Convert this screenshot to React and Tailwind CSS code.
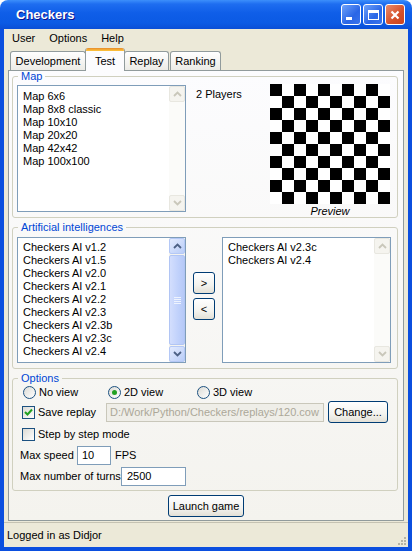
import React from "react";

const maps = ["Map 6x6", "Map 8x8 classic", "Map 10x10", "Map 20x20", "Map 42x42", "Map 100x100"];
const allAis = [
  "Checkers AI v1.2",
  "Checkers AI v1.5",
  "Checkers AI v2.0",
  "Checkers AI v2.1",
  "Checkers AI v2.2",
  "Checkers AI v2.3",
  "Checkers AI v2.3b",
  "Checkers AI v2.3c",
  "Checkers AI v2.4",
];
const chosenAis = ["Checkers AI v2.3c", "Checkers AI v2.4"];

function Chevron({ up, color }) {
  return (
    <svg width="9" height="6" viewBox="0 0 9 6">
      <polyline
        points={up ? "1,5 4.5,1.5 8,5" : "1,1 4.5,4.5 8,1"}
        fill="none"
        stroke={color}
        strokeWidth="1.8"
      />
    </svg>
  );
}

function ScrollBar({ enabled }) {
  if (!enabled) {
    return (
      <div className="w-[16px] flex flex-col justify-between bg-[#fbfbf9]">
        <div className="h-[16px] rounded-[2px] border border-[#e8e7e0] bg-[#f5f4ef] flex items-center justify-center">
          <Chevron up color="#c9c7ba" />
        </div>
        <div className="h-[16px] rounded-[2px] border border-[#e8e7e0] bg-[#f5f4ef] flex items-center justify-center">
          <Chevron color="#c9c7ba" />
        </div>
      </div>
    );
  }
  return (
    <div className="w-[16px] flex flex-col bg-[#f4f3ee]">
      <div className="h-[16px] rounded-[2px] border border-[#b4c8f6] bg-[linear-gradient(135deg,#e3ebfe,#b9cdf8)] flex items-center justify-center">
        <Chevron up color="#4d6185" />
      </div>
      <div className="flex-1 my-[1px] rounded-[2px] border border-[#b1c5f4] bg-[linear-gradient(90deg,#d3defd,#c0d1fb_60%,#b6c9f7)] flex flex-col items-center justify-center gap-[1px]">
        <div className="w-[7px] h-[1px] bg-[#eef3fe]" />
        <div className="w-[7px] h-[1px] bg-[#eef3fe]" />
        <div className="w-[7px] h-[1px] bg-[#eef3fe]" />
        <div className="w-[7px] h-[1px] bg-[#eef3fe]" />
      </div>
      <div className="h-[16px] rounded-[2px] border border-[#b4c8f6] bg-[linear-gradient(135deg,#e3ebfe,#b9cdf8)] flex items-center justify-center">
        <Chevron color="#4d6185" />
      </div>
    </div>
  );
}

function ListBox({ items, enabled, tall }) {
  return (
    <div className={`w-[169px] border border-[#7f9db9] bg-white flex ${tall ? "h-[127px]" : "h-[126px]"}`}>
      <div className={`flex-1 pl-[5px] leading-[13px] ${tall ? "pt-[4px]" : "pt-[3px]"}`}>
        {items.map((i) => (
          <div key={i}>{i}</div>
        ))}
      </div>
      <ScrollBar enabled={enabled} />
    </div>
  );
}

function XpButton({ children, className = "" }) {
  return (
    <div
      className={`h-[22px] rounded-[3px] border border-[#003c74] bg-[linear-gradient(180deg,#ffffff,#f3f3ef_60%,#e3e0d6)] flex items-center justify-center ${className}`}
    >
      {children}
    </div>
  );
}

function Radio({ checked }) {
  return (
    <div className="w-[13px] h-[13px] rounded-full border border-[#1c5180] bg-[linear-gradient(135deg,#dcdbd5,#ffffff)] flex items-center justify-center">
      {checked && <div className="w-[5px] h-[5px] rounded-full bg-[#21a121]" />}
    </div>
  );
}

function Check({ checked }) {
  return (
    <div className="w-[13px] h-[13px] border border-[#1c5180] bg-[linear-gradient(135deg,#dcdbd5,#ffffff)] flex items-center justify-center">
      {checked && (
        <svg width="9" height="9" viewBox="0 0 9 9">
          <polyline points="1,4 3.5,6.5 8,1.5" fill="none" stroke="#21a121" strokeWidth="2" />
        </svg>
      )}
    </div>
  );
}

function GroupBox({ title, children, className = "" }) {
  return (
    <fieldset className={`w-[386px] ml-[3px] pl-[4px] rounded-[3px] border border-[#d0d0bf] ${className}`}>
      <legend className="ml-[1px] px-[3px] leading-[11px] text-[#0046d5]">{title}</legend>
      {children}
    </fieldset>
  );
}

export default function App() {
  return (
    <div className="w-[412px] h-[551px] flex flex-col font-['Liberation_Sans',Arial,sans-serif] text-[11px] leading-[13px] text-black">
      {/* Title bar */}
      <div className="h-[29px] rounded-t-[8px] bg-[linear-gradient(180deg,#3c8ffb_0%,#1e6df0_14%,#0f5ee8_45%,#0b5ae4_80%,#0a4ed6_100%)] flex items-center pl-[16px] pr-[7px]">
        <span className="text-white font-bold text-[13px] [text-shadow:1px_1px_#0f1089]">Checkers</span>
        <div className="ml-auto flex gap-[2px]">
          <div className="w-[20px] h-[21px] rounded-[3px] border border-white bg-[linear-gradient(135deg,#6ea2fa,#2a66e6_60%,#3a74ec)] flex items-end pl-[4px] pb-[4px]">
            <div className="w-[6px] h-[3px] bg-white" />
          </div>
          <div className="w-[20px] h-[21px] rounded-[3px] border border-white bg-[linear-gradient(135deg,#6ea2fa,#2a66e6_60%,#3a74ec)] flex items-center justify-center">
            <div className="w-[11px] h-[10px] border border-white border-t-[3px]" />
          </div>
          <div className="w-[20px] h-[21px] rounded-[3px] border border-white bg-[linear-gradient(135deg,#ea8c6c,#d5502a_60%,#c94420)] flex items-center justify-center">
            <svg width="10" height="10" viewBox="0 0 10 10">
              <path d="M1.5 1.5 L8.5 8.5 M8.5 1.5 L1.5 8.5" stroke="white" strokeWidth="2.2" />
            </svg>
          </div>
        </div>
      </div>

      <div className="flex-1 flex flex-col bg-[#ece9d8] border-x-[4px] border-b-[4px] border-[#0b4fdf]">
        {/* Menu */}
        <div className="h-[18px] flex items-center gap-[14px] pl-[8px]">
          <span>User</span>
          <span>Options</span>
          <span>Help</span>
        </div>

        {/* Tabs */}
        <div className="h-[23px] flex items-end pl-[6px] relative z-10">
          <div className="w-[76px] h-[19px] rounded-t-[3px] border border-b-0 border-[#919b9c] bg-[linear-gradient(180deg,#ffffff,#ecebe6)] flex items-center justify-center">
            Development
          </div>
          <div className="w-[40px] h-[23px] -mb-[1px] -mx-[1px] rounded-t-[3px] border-x border-[#919b9c] bg-[#fcfcfe] flex flex-col overflow-hidden">
            <div className="h-[3px] bg-[linear-gradient(180deg,#e68b2c,#ffc73c)]" />
            <div className="flex-1 flex items-center justify-center">Test</div>
          </div>
          <div className="w-[45px] h-[19px] rounded-t-[3px] border border-b-0 border-[#919b9c] bg-[linear-gradient(180deg,#ffffff,#ecebe6)] flex items-center justify-center">
            Replay
          </div>
          <div className="w-[51px] h-[19px] ml-[1px] rounded-t-[3px] border border-b-0 border-[#919b9c] bg-[linear-gradient(180deg,#ffffff,#ecebe6)] flex items-center justify-center">
            Ranking
          </div>
        </div>

        {/* Tab panel */}
        <div className="mx-[4px] h-[451px] border border-[#919b9c] bg-[linear-gradient(180deg,#fcfcfe,#f4f3ee)] flex flex-col">
          <GroupBox title="Map" className="pb-[5px]">
            <div className="h-[130px] flex items-start pt-[3px]">
              <ListBox items={maps} tall />
              <div className="w-[74px] ml-[10px] mt-[3px]">2 Players</div>
              <div className="-mt-[1px] flex flex-col items-center">
                <div className="grid grid-cols-10 w-[120px] h-[120px]">
                  {Array.from({ length: 100 }, (_, i) => {
                    const dark = (Math.floor(i / 10) + (i % 10)) % 2 === 0;
                    return <div key={i} className={dark ? "bg-black" : "bg-white"} />;
                  })}
                </div>
                <div className="italic mt-[1px]">Preview</div>
              </div>
            </div>
          </GroupBox>

          <GroupBox title="Artificial intelligences" className="mt-[4px] pb-[5px]">
            <div className="flex items-start pt-[4px]">
              <ListBox items={allAis} enabled />
              <div className="ml-[7px] mt-[35px] flex flex-col gap-[4px]">
                <XpButton className="w-[22px]">&gt;</XpButton>
                <XpButton className="w-[22px]">&lt;</XpButton>
              </div>
              <div className="ml-[7px]">
                <ListBox items={chosenAis} />
              </div>
            </div>
          </GroupBox>

          <GroupBox title="Options" className="mt-[4px] pb-[4px]">
            <div className="pl-[3px]">
              <div className="h-[16px] flex items-center">
                <div className="w-[85px] ml-[3px] flex items-center gap-[3px]">
                  <Radio />
                  <span>No view</span>
                </div>
                <div className="w-[89px] flex items-center gap-[3px]">
                  <Radio checked />
                  <span>2D view</span>
                </div>
                <div className="flex items-center gap-[3px]">
                  <Radio />
                  <span>3D view</span>
                </div>
              </div>

              <div className="mt-[1px] h-[22px] flex items-center">
                <div className="w-[84px] ml-[2px] flex items-center gap-[3px]">
                  <Check checked />
                  <span>Save replay</span>
                </div>
                <div className="w-[218px] h-[19px] border border-[#c9c7ba] bg-[#efeee8] text-[#aca899] pl-[3px] flex items-center whitespace-nowrap overflow-hidden">
                  D:/Work/Python/Checkers/replays/120.cow
                </div>
                <XpButton className="w-[60px] ml-[4px]">Change...</XpButton>
              </div>

              <div className="mt-[3px] h-[16px] flex items-center">
                <div className="ml-[2px] flex items-center gap-[3px]">
                  <Check />
                  <span>Step by step mode</span>
                </div>
              </div>

              <div className="mt-[4px] h-[19px] flex items-center">
                <span className="w-[57px]">Max speed</span>
                <div className="w-[34px] h-[19px] border border-[#7f9db9] bg-white pl-[4px] flex items-center">10</div>
                <span className="ml-[4px]">FPS</span>
              </div>

              <div className="mt-[2px] h-[19px] flex items-center">
                <span className="w-[101px]">Max number of turns</span>
                <div className="w-[65px] h-[19px] border border-[#7f9db9] bg-white pl-[5px] flex items-center">2500</div>
              </div>
            </div>
          </GroupBox>

          <div className="mt-[4px] flex justify-center">
            <XpButton className="w-[76px]">Launch game</XpButton>
          </div>
        </div>

        {/* Status bar */}
        <div className="mt-[1px] h-[25px] border-t border-[#c5c2b2] flex items-center pl-[3px] relative">
          <span>Logged in as Didjor</span>
          <div className="absolute right-[2px] bottom-[2px] grid grid-cols-3 gap-[1px]">
            <div className="w-[2px] h-[2px]" />
            <div className="w-[2px] h-[2px]" />
            <div className="w-[2px] h-[2px] bg-[#b6b3a4]" />
            <div className="w-[2px] h-[2px]" />
            <div className="w-[2px] h-[2px] bg-[#b6b3a4]" />
            <div className="w-[2px] h-[2px] bg-[#b6b3a4]" />
            <div className="w-[2px] h-[2px] bg-[#b6b3a4]" />
            <div className="w-[2px] h-[2px] bg-[#b6b3a4]" />
            <div className="w-[2px] h-[2px] bg-[#b6b3a4]" />
          </div>
        </div>
      </div>
    </div>
  );
}
